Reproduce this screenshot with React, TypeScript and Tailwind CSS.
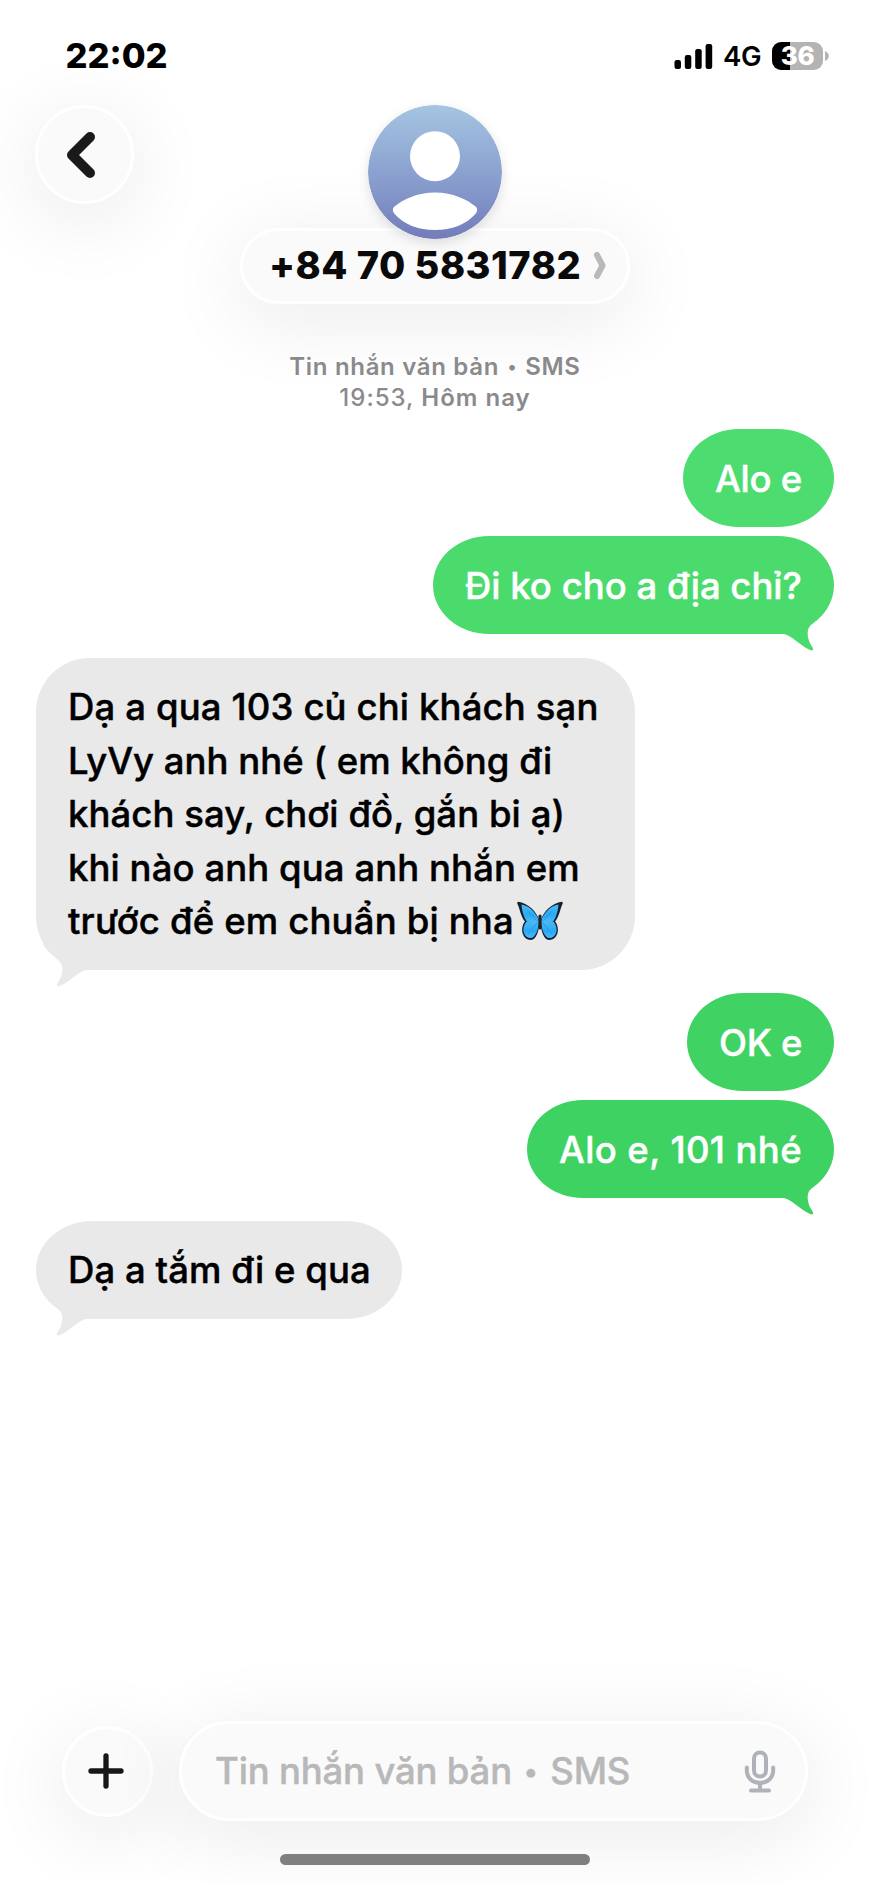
import type { ReactNode } from "react";

const glass =
  "border-[3px] border-white bg-[#fafafa] shadow-[0_14px_80px_8px_rgba(0,0,0,0.07)]";

function StatusBar() {
  return (
    <div className="flex h-[105px] items-start justify-between pl-[65.5px] pr-[41px]">
      <div className="mt-[36px] text-[34.5px] leading-[40px] font-extrabold text-black">22:02</div>
      <div className="mt-[36px] flex h-[40px] items-center">
        <svg className="h-[25px] w-[39px]" viewBox="0 0 39 25" fill="#000">
          <rect x="0.5" y="16" width="6.5" height="9" rx="2.2" />
          <rect x="10.8" y="11" width="6.5" height="14" rx="2.2" />
          <rect x="21.2" y="5" width="6.5" height="20" rx="2.2" />
          <rect x="31.6" y="0" width="6.6" height="25" rx="2.2" />
        </svg>
        <span className="ml-[10px] w-[49px] text-[27.5px] leading-[40px] font-semibold tracking-[-0.3px] text-black">4G</span>
        <div className="flex h-[28px] w-[51px] items-center justify-center rounded-[9px] bg-[linear-gradient(90deg,#000_0_18px,#b4b4b4_18px)]">
          <span className="text-[26px] leading-[34px] font-extrabold tracking-[-0.3px] text-white">36</span>
        </div>
        <svg className="ml-[2px] h-[10px] w-[4px]" viewBox="0 0 4 10" fill="#b4b4b4">
          <path d="M0 0C2.6 1 3.8 3 3.8 5S2.6 9 0 10Z" />
        </svg>
      </div>
    </div>
  );
}

function Avatar() {
  return (
    <svg className="relative z-10 h-[134px] w-[134px] rounded-full shadow-[0_4px_12px_rgba(0,0,0,0.12)]" viewBox="0 0 134 134">
      <defs>
        <linearGradient id="avatarFill" x1="0" y1="0" x2="0" y2="1">
          <stop offset="0" stopColor="#a5c5e2" />
          <stop offset="0.5" stopColor="#8ba2d0" />
          <stop offset="1" stopColor="#727cba" />
        </linearGradient>
      </defs>
      <circle cx="67" cy="67" r="67" fill="url(#avatarFill)" />
      <circle cx="67" cy="51.2" r="25" fill="#fff" />
      <path
        d="M67 87.5C85 87.5 99 94.500 107.500 101.500C109.700 103.400 109.700 106 107.800 108.500C98.500 119.500 83.500 125 67 125S35.500 119.500 26.200 108.500C24.300 106 24.300 103.400 26.500 101.500C35 94.500 49 87.500 67 87.500Z"
        fill="#fff"
      />
    </svg>
  );
}

function Header() {
  return (
    <div className="grid h-[199px] grid-cols-[240px_390px_240px] items-start">
      <button className={`ml-[35px] flex h-[99px] w-[99px] items-center justify-center rounded-full pr-[7px] ${glass}`}>
        <svg className="h-[48px] w-[30px]" viewBox="0 0 30 48" fill="none" stroke="#1a1a1a" strokeWidth="10" strokeLinecap="round" strokeLinejoin="round">
          <path d="M24 6L6 24L24 42" />
        </svg>
      </button>
      <div className="flex flex-col items-center">
        <Avatar />
        <div className={`-mt-[11px] flex h-[76px] w-[390px] items-center rounded-full pb-[2px] pl-[26px] ${glass}`}>
          <span className="w-[324px] text-[38px] leading-[44px] font-extrabold tracking-[0.5px] whitespace-nowrap text-[#0a0a0a]">
            +84 70 5831782
          </span>
          <svg className="h-[29px] w-[14px]" viewBox="0 0 14 29" fill="none" stroke="#b9b9b9" strokeWidth="6" strokeLinecap="round" strokeLinejoin="round">
            <path d="M4 4L9.500 14.500L4 25" />
          </svg>
        </div>
      </div>
    </div>
  );
}

type BubbleProps = { out?: boolean; tail?: boolean; size: string; color: string; fill: string; children: ReactNode };

function Bubble({ out, tail, size, color, fill, children }: BubbleProps) {
  return (
    <div
      className={`relative px-[32px] text-[36.5px] leading-[53.5px] font-medium whitespace-nowrap [-webkit-text-stroke:0.45px_currentColor] ${size} ${color} ${
        out ? "self-end pt-[23.5px] text-white" : "self-start pt-[23px] text-black"
      }`}
    >
      {children}
      {tail && (
        <svg
          className={`absolute -bottom-[18px] h-[52px] w-[56px] ${out ? "right-0" : "left-0 -scale-x-100"}`}
          viewBox="0 0 56 52"
          fill={fill}
        >
          <path d="M0 34H6C14 36 20 44 32 50C35.500 51.300 36 49 34 46.500C29.500 40 28.500 32 31 27.500C35 21.500 43 18 49 8.500L30 0L0 20Z" />
        </svg>
      )}
    </div>
  );
}

function Butterfly() {
  return (
    <svg className="ml-[3px] inline-block h-[40px] w-[46px] align-[-7px]" viewBox="0 0 46 40">
      <defs>
        <linearGradient id="wing" x1="0" y1="0" x2="0" y2="1">
          <stop offset="0" stopColor="#4bbcf5" />
          <stop offset="0.6" stopColor="#2ba8f4" />
          <stop offset="1" stopColor="#45bbf8" />
        </linearGradient>
        <g id="half">
          <path d="M22 19C20 11 11 2 1 .8C-.2 1 .2 3 1 4C3 9 4 16 8 20.500C5.500 23 4.500 28 5.500 32C7 37.500 12 40 16 38.500C20 36 21.500 30 22.500 23Z" fill="#14202e" />
          <path d="M22 20C19.500 12.500 12.500 4.500 4.500 3.600C5 9.500 6.500 16 9.500 20C14 21 18 20.500 22 20.500Z" fill="url(#wing)" />
          <path d="M22 20C17 19.500 12 19.500 9.500 20.500C6.500 24.500 5.700 28.500 6.900 32C8.300 36 12.500 38 15.800 36.500C19.500 33.500 21 28 22 22Z" fill="url(#wing)" />
          <path d="M20.500 20.500L10.500 9.500M20.500 21.500L11 33" stroke="#2589d6" strokeWidth="0.6" />
        </g>
      </defs>
      <use href="#half" />
      <use href="#half" transform="translate(46 0) scale(-1 1)" />
      <rect x="21.400" y="13.500" width="3.200" height="15" rx="1.600" fill="#20242a" />
    </svg>
  );
}

function Messages() {
  return (
    <div className="mt-[16px] flex flex-col pr-[36px] pl-[36px]">
      <Bubble out size="h-[98px] w-[151px] rounded-[56px/49px]" color="bg-[#4cdc6f]" fill="#4cdc6f">
        <span className="tracking-[-0.3px]">Alo e</span>
      </Bubble>
      <Bubble out tail size="mt-[9px] h-[98px] w-[401px] rounded-[56px/49px]" color="bg-[#4adb6c]" fill="#4adb6c">
        <span>Đi ko cho a địa chỉ?</span>
      </Bubble>
      <Bubble tail size="mt-[24px] h-[312px] w-[599px] rounded-[54px]" color="bg-[#e9e9e9]" fill="#e9e9e9">
        <p className="tracking-[0.14px]">Dạ a qua 103 củ chi khách sạn</p>
        <p className="tracking-[0.02px]">LyVy anh nhé ( em không đi</p>
        <p className="tracking-[0.06px]">khách say, chơi đồ, gắn bi ạ)</p>
        <p className="tracking-[0.08px]">khi nào anh qua anh nhắn em</p>
        <p className="h-[53.5px] tracking-[0.17px]">
          trước để em chuẩn bị nha
          <Butterfly />
        </p>
      </Bubble>
      <Bubble out size="mt-[23px] h-[98px] w-[147px] rounded-[56px/49px]" color="bg-[#40d364]" fill="#40d364">
        <span className="tracking-[-0.3px]">OK e</span>
      </Bubble>
      <Bubble out tail size="mt-[9px] h-[98px] w-[307px] rounded-[56px/49px]" color="bg-[#3ed262]" fill="#3ed262">
        <span className="tracking-[0.38px]">Alo e, 101 nhé</span>
      </Bubble>
      <Bubble tail size="mt-[23px] h-[98px] w-[366px] rounded-[56px/49px]" color="bg-[#e9e9e9]" fill="#e9e9e9">
        <span className="tracking-[0.05px]">Dạ a tắm đi e qua</span>
      </Bubble>
    </div>
  );
}

function Composer() {
  return (
    <div className="mt-auto flex h-[162px] flex-col items-center">
      <div className="flex w-full items-center pr-[62px] pl-[62px]">
        <button className={`flex h-[91px] w-[91px] items-center justify-center rounded-full pr-[3px] ${glass}`}>
          <svg className="h-[36px] w-[36px]" viewBox="0 0 36 36" fill="none" stroke="#171717" strokeWidth="5.300" strokeLinecap="round">
            <path d="M18 3V33M3 18H33" />
          </svg>
        </button>
        <div className={`ml-[26px] flex h-[100px] flex-1 items-center justify-between rounded-full pr-[29px] pl-[33px] ${glass}`}>
          <span className="text-[36.5px] leading-[44px] font-medium tracking-[-0.18px] whitespace-nowrap text-[#b8b8b9] [-webkit-text-stroke:0.45px_currentColor]">
            Tin nhắn văn bản <span className="inline-block scale-75">•</span> SMS
          </span>
          <svg className="h-[43px] w-[32px]" viewBox="0 0 32 43" fill="none" stroke="#afb2b8" strokeWidth="4" strokeLinecap="round">
            <rect x="10" y="2.500" width="12" height="24" rx="6" />
            <path d="M2.800 17.500V20C2.800 27.500 8 32.800 16 32.800S29.200 27.500 29.200 20V17.500M16 33V39M7 40.500H25" />
          </svg>
        </div>
      </div>
      <div className="mt-[33px] h-[11px] w-[310px] rounded-full bg-[#7f7f7f]" />
    </div>
  );
}

export default function App() {
  return (
    <div className="flex h-[1883px] w-[870px] flex-col overflow-hidden bg-white font-['Inter',sans-serif]">
      <StatusBar />
      <Header />
      <div className="mt-[47px] text-center text-[24px] leading-[31px] font-semibold text-[#8a8a8d]">
        <p className="tracking-[0.68px]">
          Tin nhắn văn bản <span className="inline-block scale-75">•</span> SMS
        </p>
        <p className="tracking-[1px]">
          <span className="font-medium">19:53,</span> Hôm nay
        </p>
      </div>
      <Messages />
      <Composer />
    </div>
  );
}
